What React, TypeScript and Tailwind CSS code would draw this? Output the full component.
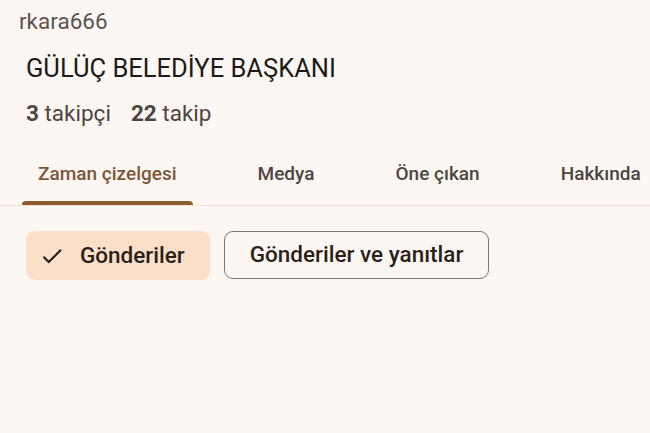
import React from "react";

export default function App() {
  const tabs = ["Zaman çizelgesi", "Medya", "Öne çıkan", "Hakkında"];
  return (
    <div
      className="w-[650px] h-[433px] overflow-hidden bg-[#fdf7f4] text-[#201a17]"
      style={{ fontFamily: "Roboto, 'Noto Sans', sans-serif" }}
    >
      <div className="pl-[19px] pt-[7px] text-[22.5px] leading-[28px] text-[#5b534e]">rkara666</div>
      <div className="pl-[26px] pt-[17px] text-[25.5px] leading-[32px] text-[#201a17]">GÜLÜÇ BELEDİYE BAŞKANI</div>
      <div className="pl-[26px] pt-[15px] text-[22.5px] leading-[28px] text-[#4e4540] flex gap-[20px]">
        <span><b className="font-bold">3</b> takipçi</span>
        <span><b className="font-bold">22</b> takip</span>
      </div>
      <div className="mt-[22px] border-b border-[#f1e0d8] flex pl-[22px] gap-[49px] whitespace-nowrap">
        {tabs.map((t, i) => (
          <div key={t} className="relative px-[16px] h-[56px] flex items-start pt-[12px]">
            <span className={`text-[19px] leading-[26px] font-medium ${i === 0 ? "text-[#7d5637]" : "text-[#4e4540]"}`}>{t}</span>
            {i === 0 && (
              <div className="absolute left-0 right-0 bottom-0 h-[4px] rounded-t-[4px] bg-[#8b5a2f]" />
            )}
          </div>
        ))}
      </div>
      <div className="flex pl-[26px] pt-[25px] gap-[14px]">
        <div className="h-[49px] w-[184px] rounded-[9px] bg-[#fbdfc9] flex items-center pl-[13px]">
          <svg width="26" height="26" viewBox="0 0 24 24" fill="#2a1f19">
            <path d="M9 16.17L4.83 12l-1.42 1.41L9 19 21 7l-1.41-1.41z" />
          </svg>
          <span className="ml-[15px] text-[22.5px] font-medium text-[#2a1f19]">Gönderiler</span>
        </div>
        <div className="h-[48px] w-[265px] rounded-[9px] border border-[#7e7570] flex items-center justify-center">
          <span className="text-[22.5px] font-medium text-[#2a1f19]">Gönderiler ve yanıtlar</span>
        </div>
      </div>
    </div>
  );
}
